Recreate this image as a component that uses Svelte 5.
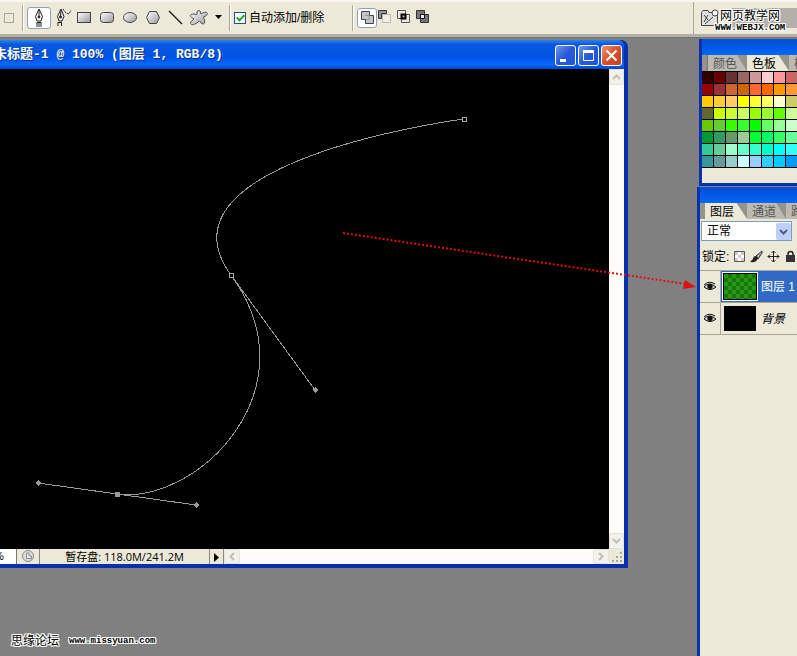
<script>
  const swatches = [
    ['#300', '#600', '#633', '#966', '#c99', '#fcc', '#f99', '#c66'],
    ['#900', '#933', '#c63', '#c60', '#f63', '#f60', '#f90', '#f93'],
    ['#fc0', '#fc3', '#fc6', '#ff0', '#ff3', '#ff6', '#ffc', '#cc6'],
    ['#663', '#cf0', '#cf3', '#cf6', '#9f0', '#9f3', '#6f0', '#cf9'],
    ['#6c0', '#6c3', '#3f0', '#3f3', '#0f0', '#6f6', '#9f9', '#cfc'],
    ['#093', '#396', '#696', '#9c9', '#0f3', '#0f6', '#3f6', '#6f9'],
    ['#3c9', '#6c9', '#9fc', '#6fc', '#3fc', '#0fc', '#0ff', '#3ff'],
    ['#399', '#699', '#9cc', '#cff', '#9cf', '#3cf', '#0cf', '#09f']
  ];

  const layers = [
    { name: '图层 1', kind: 'green', selected: true },
    { name: '背景', kind: 'black', selected: false }
  ];

  let autoAdd = $state(true);
  let mode = $state('正常');
</script>

<div class="app">
  <header class="options">
    <button class="tool" aria-label="工具预设">
      <svg width="14" height="20"><rect x="4.5" y="5.5" width="9" height="9" fill="#ece8dc" stroke="#aaa799" /></svg>
    </button>
    <span class="sep first"></span>
    <button class="tool pen on" aria-label="钢笔工具">
      <svg width="22" height="20" fill="none" stroke="#222">
        <path d="M11 1L7.5 8.5L9 13H13L14.5 8.5Z" fill="#fff" /><path d="M11 2V9M9 14.5H13M9 14V19M13 14V19M11 15V19" /><circle cx="11" cy="9" r="1" fill="#222" />
      </svg>
    </button>
    <button class="tool free" aria-label="自由钢笔工具">
      <svg width="20" height="20" fill="none" stroke="#222">
        <path d="M8 1L4.5 8.5L6 13H9L11 8.5Z" fill="#eee" /><path d="M8 2L7.5 9M5 14.5H9M5 14V18M8.5 14V18" /><circle cx="7.5" cy="9" r="1" fill="#222" /><path d="M10 1L13 5L16 6L18 2" stroke-dasharray="2 1" />
      </svg>
    </button>
    <svg width="0" height="0" aria-hidden="true">
      <defs><linearGradient id="metal" x1="0" y1="0" x2="1" y2="1"><stop offset="0" stop-color="#fff" /><stop offset="1" stop-color="#999" /></linearGradient></defs>
    </svg>
    <button class="tool shape" aria-label="矩形工具"><svg width="23" height="20"><rect x="4.5" y="4.5" width="13" height="10" fill="url(#metal)" stroke="#444" /></svg></button>
    <button class="tool shape" aria-label="圆角矩形工具"><svg width="23" height="20"><rect x="4.5" y="4.5" width="13" height="10" rx="3" fill="url(#metal)" stroke="#444" /></svg></button>
    <button class="tool shape" aria-label="椭圆工具"><svg width="23" height="20"><ellipse cx="11" cy="9.5" rx="6.5" ry="5" fill="url(#metal)" stroke="#444" /></svg></button>
    <button class="tool shape" aria-label="多边形工具"><svg width="23" height="20"><path d="M7.5 3.5H14.5L17.5 9.5L14.5 15.5H7.5L4.5 9.5Z" fill="url(#metal)" stroke="#444" /></svg></button>
    <button class="tool shape" aria-label="直线工具"><svg width="23" height="20"><path d="M4 3L17 16" stroke="#111" stroke-width="1.3" /></svg></button>
    <button class="tool shape" aria-label="自定形状工具">
      <svg width="23" height="20"><path d="M10 2.500Q12.500 1.500 13 6Q18 2.500 19.500 5.500Q19 8 15.500 9Q18 15 15.500 16Q13 16 11.500 13Q4 19 2.500 15.500Q2 13.500 6 11Q0.500 8 3 6.500Q5 5.500 9 6.500Q8.500 3.500 10 2.500Z" fill="url(#metal)" stroke="#555" /></svg>
    </button>
    <button class="tool more" aria-label="形状选项"><svg width="7" height="20"><path d="M0 7H7L3.5 11Z" /></svg></button>
    <span class="sep second"></span>
    <label class="check">
      <input type="checkbox" bind:checked={autoAdd} />
      <span>自动添加/删除</span>
    </label>
    <span class="sep third"></span>
    <button class="tool combine on" aria-label="添加到形状区域"><svg width="18" height="18" fill="#c4c4c4" stroke="#444"><path d="M3.5 2.5H11.5V6.5H15.5V14.5H7.5V10.5H3.5Z" /><path d="M7.5 7V6.5H11V10.5H8" stroke="#999" fill="none" /></svg></button>
    <button class="tool combine" aria-label="从形状区域减去"><svg width="19" height="18" fill="none"><path d="M1.5 1.5H9.5V4.5H4.5V9.5H1.5Z" fill="#999" stroke="#333" /><path d="M5.5 5.5H13.5V13.5H5.5Z" fill="#f0ede2" stroke="#bbb8ad" /></svg></button>
    <button class="tool combine" aria-label="交叉形状区域"><svg width="19" height="18" fill="none"><path d="M1.5 1.5H9.5V9.5H1.5ZM5.5 5.5H13.5V13.5H5.5Z" stroke="#555" /><path d="M5.5 5.5H9.5V9.5H5.5Z" fill="#aaa" stroke="#000" stroke-width="2" /></svg></button>
    <button class="tool combine" aria-label="重叠形状区域除外"><svg width="19" height="18"><path d="M1.5 1.5H9.5V9.5H1.5ZM5.5 5.5H13.5V13.5H5.5Z" fill="#777" stroke="#333" /><path d="M5.5 5.5H9.5V9.5H5.5Z" fill="#eee" stroke="#111" /></svg></button>

    <div class="well">
      <button class="tool browse" aria-label="文件浏览器">
        <svg width="20" height="20" fill="#e0e0e0" stroke="#444"><path d="M1.5 4.5L3 2.5H8L9 4.5H17.5V17.5H1.5Z" /><path d="M4 7L8 12M8 7L4 14M5 16L13 9" /><circle cx="15" cy="5" r="3" fill="#fff" /></svg>
      </button>
      <div class="dock"></div>
      <div class="mark">
        <strong>网页教学网</strong>
        <small>WWW.WEBJX.COM</small>
      </div>
    </div>
  </header>

  <main class="desktop">
    <section class="document">
      <div class="titlebar">
        <h1>未标题-1 @ 100% (图层 1, RGB/8)</h1>
        <div class="controls">
          <button aria-label="最小化"><svg width="19" height="19"><path d="M4 13H10V16H4Z" fill="#fff" /></svg></button>
          <button aria-label="最大化"><svg width="19" height="19" fill="none" stroke="#fff"><path d="M4.5 4.5H14.5V14.5H4.5Z" /><path d="M4 5.5H15" stroke-width="3" /></svg></button>
          <button class="close" aria-label="关闭"><svg width="19" height="19" stroke="#fff" stroke-width="2.2"><path d="M4.5 4.5L14.5 14.5M14.5 4.5L4.5 14.5" /></svg></button>
        </div>
      </div>
      <div class="view">
        <div class="canvas">
          <svg width="609" height="480" fill="none" stroke="#999" shape-rendering="crispEdges">
            <path d="M464 50C464 50 147 91 231 206C315 321 196 436 117 425" />
            <path d="M231 206L315 321M38 414L196 436" />
            <path d="M462.5 48.5H466.5V52.5H462.5ZM229.5 204.5H233.5V208.5H229.5Z" stroke="#aaa" fill="#000" />
            <path d="M115 423H120V428H115ZM38 411L41 414L38 417L35 414ZM196 433L199 436L196 439L193 436ZM315 318L318 321L315 324L312 321Z" fill="#999" stroke="none" />
          </svg>
        </div>
        <div class="vscroll">
          <button aria-label="向上滚动"><svg width="13" height="14"><path d="M3 9L6.5 5.5L10 9" /></svg></button>
          <button aria-label="向下滚动"><svg width="13" height="14"><path d="M3 5L6.5 8.5L10 5" /></svg></button>
        </div>
      </div>
      <div class="status">
        <span class="zoom">%</span>
        <button class="info" aria-label="版本信息">
          <svg width="14" height="14" fill="#ddd" stroke="#888"><circle cx="7" cy="7" r="5.5" /><path d="M5.5 4V9.5H10.5V7H8V4Z" fill="#eee" /></svg>
        </button>
        <span class="scratch">暂存盘: 118.0M/241.2M</span>
        <button class="arrow" aria-label="状态栏选项"><svg width="13" height="14"><path d="M4 3V12L9 7.5Z" /></svg></button>
        <div class="hscroll">
          <button aria-label="向左滚动"><svg width="14" height="13"><path d="M9 3L5.5 6.5L9 10" /></svg></button>
          <button aria-label="向右滚动"><svg width="14" height="13"><path d="M5 3L8.5 6.5L5 10" /></svg></button>
        </div>
        <svg class="grip" width="15" height="15" fill="#aaa79a"><path d="M11 3H13V5H11ZM11 7H13V9H11ZM7 7H9V9H7ZM11 11H13V13H11ZM7 11H9V13H7ZM3 11H5V13H3Z" /></svg>
      </div>
    </section>

    <aside class="panels">
      <section class="panel swatch-panel">
        <div class="bar"></div>
        <div class="tabs">
          <button class="tab color">颜色</button>
          <button class="tab active">色板</button>
          <button class="tab">样式</button>
        </div>
        <div class="swatches">
          {#each swatches as row}
            {#each row as color}
              <button style="background:{color}" aria-label={color}></button>
            {/each}
          {/each}
        </div>
        <div class="foot"></div>
      </section>

      <section class="panel layer-panel">
        <div class="bar"></div>
        <div class="tabs">
          <button class="tab active">图层</button>
          <button class="tab">通道</button>
          <button class="tab">路径</button>
        </div>
        <div class="mode">
          <select bind:value={mode} aria-label="混合模式"><option>正常</option><option>溶解</option></select>
          <svg width="15" height="17"><rect width="15" height="17" rx="2" fill="#bed0fa" /><path d="M4 7L7.5 10.5L11 7" fill="none" stroke="#4d6185" stroke-width="2" /></svg>
        </div>
        <div class="locks">
          <span>锁定:</span>
          <button aria-label="锁定透明像素"><svg width="13" height="14"><path d="M1.5 1.5H11.5V11.5H1.5Z" fill="#fff" stroke="#555" /><path d="M2 2H5V5H2ZM8 2H11V5H8ZM5 5H8V8H5ZM2 8H5V11H2ZM8 8H11V11H8Z" fill="#ccc" /></svg></button>
          <button aria-label="锁定图像像素"><svg width="13" height="14"><path d="M12 1L6 6L8 9L12 3Z" fill="#aaa" stroke="#333" /><path d="M6 6Q3 6 3 9L0 12Q7 13 8 8Z" fill="#222" /></svg></button>
          <button aria-label="锁定位置"><svg width="13" height="14" fill="none" stroke="#222"><path d="M1 6.5H12M6.5 1V12M4.5 3L6.5 1L8.5 3M4.5 10L6.5 12L8.5 10M3 4.5L1 6.5L3 8.5M10 4.5L12 6.5L10 8.5" /></svg></button>
          <button aria-label="全部锁定"><svg width="13" height="14"><path d="M4 6V4Q4 1.500 6.500 1.500T9 4V6" fill="none" stroke="#222" stroke-width="1.5" /><path d="M2 5H11V12H2Z" fill="#333" /></svg></button>
        </div>
        <ul class="layers">
          {#each layers as layer}
            <li>
              <button class="eye" aria-label="显示 {layer.name}">
                <svg width="14" height="12" fill="none" stroke="#111"><path d="M1 6Q6 0 13 6Q7 11 1 6Z" fill="#ddd" /><path d="M1 4Q6 -1 12 3" /><circle cx="7" cy="5.5" r="2.3" fill="#111" /></svg>
              </button>
              <button class="layer" class:selected={layer.selected}>
                <span class="thumb {layer.kind}"></span>
                <span class="name" class:italic={!layer.selected}>{layer.name}</span>
              </button>
            </li>
          {/each}
        </ul>
      </section>
    </aside>

    <svg class="pointer" width="360" height="62" fill="none" stroke="#e01010">
      <path d="M3 4L346 55" stroke-width="2" stroke-dasharray="2 2" /><path d="M345 51L356 58L343 60Z" fill="#e01010" stroke="none" />
    </svg>
    <footer class="mark credit">
      <strong>思缘论坛</strong>
      <small>www.missyuan.com</small>
    </footer>
  </main>
</div>

<style>
  :global(body) { margin: 0; }
  .app {
    min-height: 100vh;
    display: flex;
    flex-direction: column;
    overflow: hidden;
    background: #808080;
    color: #000;
    font: 12px/16px "Liberation Sans", "Noto Sans CJK SC", sans-serif;
  }
  .app button { padding: 0; border: 0; background: none; color: inherit; font: inherit; flex: none; }
  svg { display: block; flex: none; }

  .options {
    display: flex;
    align-items: center;
    height: 32px;
    border-top: 2px solid #f8f6ee;
    border-bottom: 3px solid #b5b1a5;
    background: #ece9d8;
    white-space: nowrap;
  }
  .sep { width: 1px; height: 26px; border-right: 1px solid #fff; background: #aaa799; flex: none; }
  .sep.first { margin: 0 3px 0 8px; }
  .sep.second { margin: 0 3px 0 7px; }
  .sep.third { margin: 0 3px 0 28px; }
  .app .tool.on { border: 1px solid #8fa0b8; border-radius: 3px; background: #fff; }
  .free { margin-left: 2px; }
  .more { margin-left: 4px; }
  .check { display: flex; align-items: center; gap: 3px; }
  .check input {
    appearance: none;
    width: 12px;
    height: 12px;
    margin: 0;
    border: 1px solid #1c5180;
    background: #fff;
    position: relative;
  }
  .check input:checked::after {
    content: "";
    position: absolute;
    left: 3px;
    top: 0;
    width: 3px;
    height: 6px;
    border: solid #21a121;
    border-width: 0 2px 2px 0;
    transform: rotate(45deg);
  }
  .well {
    display: flex;
    align-items: center;
    width: 104px;
    height: 32px;
    margin-left: auto;
    border-left: 1px solid #aaa799;
    position: relative;
    padding-left: 6px;
    box-sizing: border-box;
  }
  .dock { flex: 1; height: 20px; margin-left: 12px; background: #b2b0a8; }
  .mark { white-space: nowrap; text-shadow: 1px 0 #fff, -1px 0 #fff, 0 1px #fff, 0 -1px #fff, 1px 1px #fff, -1px -1px #fff, 1px -1px #fff, -1px 1px #fff; }
  .mark strong { font-weight: 400; }
  .mark small { font: bold 9px/9px "Liberation Mono", monospace; }
  .well .mark { position: absolute; left: 21px; top: 6px; display: flex; flex-direction: column; }
  .well .mark strong { padding-left: 5px; }

  .desktop { flex: 1; display: flex; position: relative; border-top: 1px solid #72736f; }
  .document {
    flex: 1;
    min-width: 0;
    align-self: flex-start;
    margin: 2px 69px 0 0;
    border: solid #0831b0;
    border-width: 0 4px 4px 0;
    border-radius: 0 7px 0 0;
    background: #0831b0;
  }
  .titlebar {
    display: flex;
    align-items: center;
    justify-content: space-between;
    height: 29px;
    border-radius: 0 6px 0 0;
    background: linear-gradient(#2c83ee 0, #0a58e0 15%, #0054e3 60%, #0668ff 85%, #0048c8 100%);
    overflow: hidden;
  }
  h1 {
    margin: 0 0 0 -6px;
    color: #fff;
    font: bold 13px/20px "Liberation Mono", "Noto Sans CJK SC", monospace;
    text-shadow: 1px 1px #06308a;
    white-space: nowrap;
  }
  .controls { display: flex; gap: 2px; padding: 2px 2px 0 0; }
  .app .controls button {
    border: 1px solid #fff;
    border-radius: 3px;
    background: linear-gradient(135deg, #7198f0, #2858d8 50%, #1c56e0);
  }
  .app .controls .close { background: linear-gradient(135deg, #ef9478, #dc4e28 50%, #c8401c); }
  .view { display: flex; background: #000; }
  .canvas { flex: 1; min-width: 0; overflow: hidden; background: #000; }
  .vscroll { display: flex; flex-direction: column; justify-content: space-between; align-items: center; width: 15px; background: #fdfcf8; }
  .app .vscroll button, .app .hscroll button { border: 1px solid #e5e2d8; border-radius: 2px; background: #f2f1eb; }
  .vscroll path, .hscroll path { fill: none; stroke: #c2c0b4; stroke-width: 2; }
  .status { display: flex; align-items: stretch; height: 15px; background: #ece9d8; line-height: 15px; overflow: hidden; font-size: 11px; }
  .zoom { width: 17px; background: #fff; border-right: 1px solid #777; text-indent: -6px; box-sizing: border-box; }
  .info { width: 22px; display: flex; justify-content: center; }
  .scratch { width: 171px; box-sizing: border-box; border: solid #888; border-width: 0 1px; text-align: center; font-family: "Open Sans", "Noto Sans CJK SC", sans-serif; white-space: nowrap; }
  .app .arrow { border-right: 1px solid #888; }
  .hscroll { flex: 1; display: flex; justify-content: space-between; background: #fdfcf8; }

  .panels { width: 100px; display: flex; flex-direction: column; overflow: hidden; flex: none; padding-top: 1px; }
  .panel { border-left: 3px solid #0831b0; overflow: hidden; background: #ece9d8; }
  .swatch-panel { margin-left: 2px; border-bottom: 3px solid #0831b0; }
  .bar { height: 16px; background: linear-gradient(#0a4cd0, #0058e6 50%, #0668f5); }
  .tabs { display: flex; height: 16px; background: #96938b; overflow: hidden; }
  .app .tab { padding: 0 10px 0 5px; background: #bdbab2; color: #555; line-height: 18px; clip-path: polygon(0 0, 75% 0, 100% 100%, 0 100%); }
  .app .tab.active { padding-right: 13px; background: #ece9d8; color: #000; }
  .app .tab.color { margin-left: 5px; border-left: 1px solid #777; }
  .layer-panel .tabs { padding-left: 5px; }
  .swatches { display: grid; grid-template-columns: repeat(8, 11px); grid-auto-rows: 11px; gap: 1px; width: 95px; padding-bottom: 1px; background: #000; border-top: 1px solid #000; }
  .foot { height: 15px; background: #ece9d8; }
  .layer-panel { flex: 1; margin-top: 1px; }
  .mode { display: flex; align-items: center; width: 91px; height: 20px; margin: 2px 0 0 1px; border: 1px solid #7f9db9; background: #fff; box-sizing: border-box; }
  .mode select { flex: 1; min-width: 0; appearance: none; border: 0; padding: 0 5px; background: none; font: inherit; outline: 0; }
  .locks { display: flex; align-items: center; gap: 4px; height: 29px; padding: 3px 0 0 2px; box-sizing: border-box; white-space: nowrap; }
  .locks span { width: 28px; }
  .layers { list-style: none; margin: 0; padding: 0; border-top: 1px solid #aaa799; }
  li { display: flex; height: 31px; border-bottom: 1px solid #aaa799; }
  .app .eye { width: 21px; display: flex; align-items: center; justify-content: center; border-right: 1px solid #aaa799; }
  .app .layer { flex: 1; display: flex; align-items: center; gap: 5px; padding-left: 3px; white-space: nowrap; overflow: hidden; }
  .app .selected { background: #316ac5; color: #fff; }
  .thumb { width: 32px; height: 25px; flex: none; background: #000; }
  .green {
    background: repeating-conic-gradient(#127a0a 0 25%, #2c9416 0 50%) 0 0 / 8px 8px;
    outline: 1px solid #000;
    box-shadow: 0 0 0 2px #fff;
  }
  .italic { font-style: italic; }

  .pointer { position: absolute; left: 340px; top: 191px; pointer-events: none; }
  .credit { position: absolute; left: 11px; bottom: 7px; display: flex; align-items: center; gap: 10px; }
</style>
